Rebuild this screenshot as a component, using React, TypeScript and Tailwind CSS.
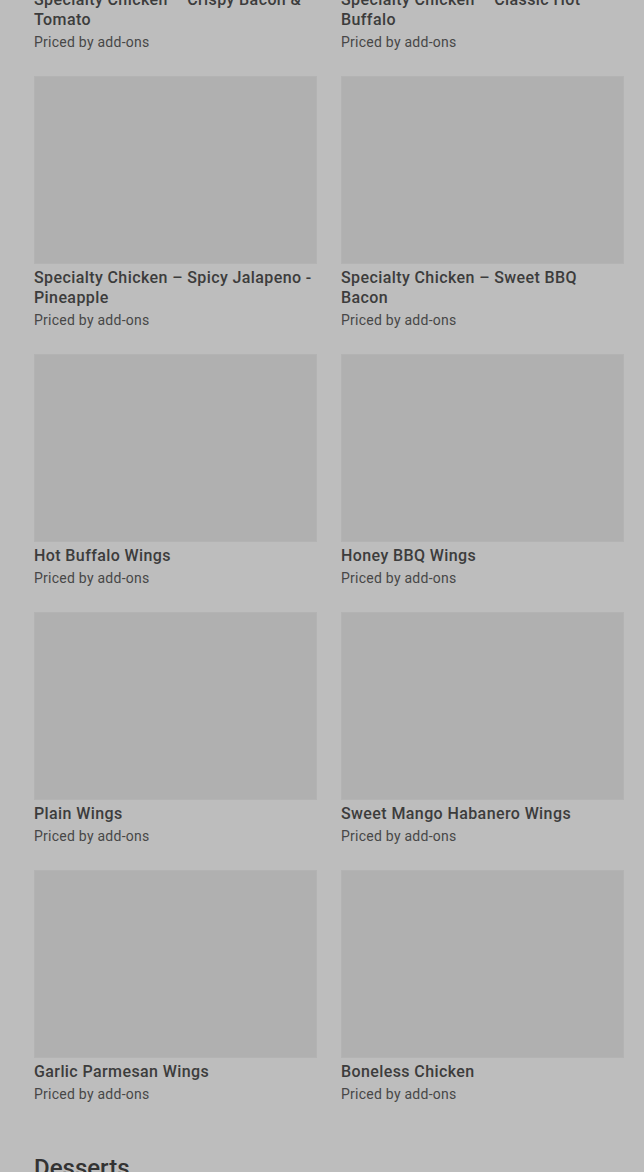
import React from 'react';

interface MenuItem {
  name: string;
}

const items: MenuItem[] = [
  { name: 'Specialty Chicken – Crispy Bacon & Tomato' },
  { name: 'Specialty Chicken – Classic Hot Buffalo' },
  { name: 'Specialty Chicken – Spicy Jalapeno - Pineapple' },
  { name: 'Specialty Chicken – Sweet BBQ Bacon' },
  { name: 'Hot Buffalo Wings' },
  { name: 'Honey BBQ Wings' },
  { name: 'Plain Wings' },
  { name: 'Sweet Mango Habanero Wings' },
  { name: 'Garlic Parmesan Wings' },
  { name: 'Boneless Chicken' },
];

const ItemCard: React.FC<{ item: MenuItem }> = ({ item }) => (
  <div className="flex flex-col pb-6">
    <div className="h-[188px] w-full bg-[#b0b0b0] border border-[#b3b3b3]" />
    <h3 className="mt-1 text-[16px] leading-5 font-medium tracking-[0.4px] text-[#3c3c3c]">{item.name}</h3>
    <p className="mt-[2px] text-[14px] leading-5 tracking-[0.25px] text-[#474747]">Priced by add-ons</p>
  </div>
);

export default function App() {
  return (
    <div
      className="h-[1172px] w-full overflow-hidden bg-[#bdbdbd]"
      style={{ fontFamily: 'Roboto, "Liberation Sans", sans-serif' }}
    >
      {/* page is scrolled: first row sits partly above the viewport */}
      <div className="-mt-[202px] pl-[34px] pr-[20px]">
        <div className="grid grid-cols-2 gap-x-6">
          {items.map((item) => (
            <ItemCard key={item.name} item={item} />
          ))}
        </div>
        <h2 className="mt-[24px] text-[24px] leading-8 font-medium text-[#333333]">Desserts</h2>
      </div>
    </div>
  );
}
